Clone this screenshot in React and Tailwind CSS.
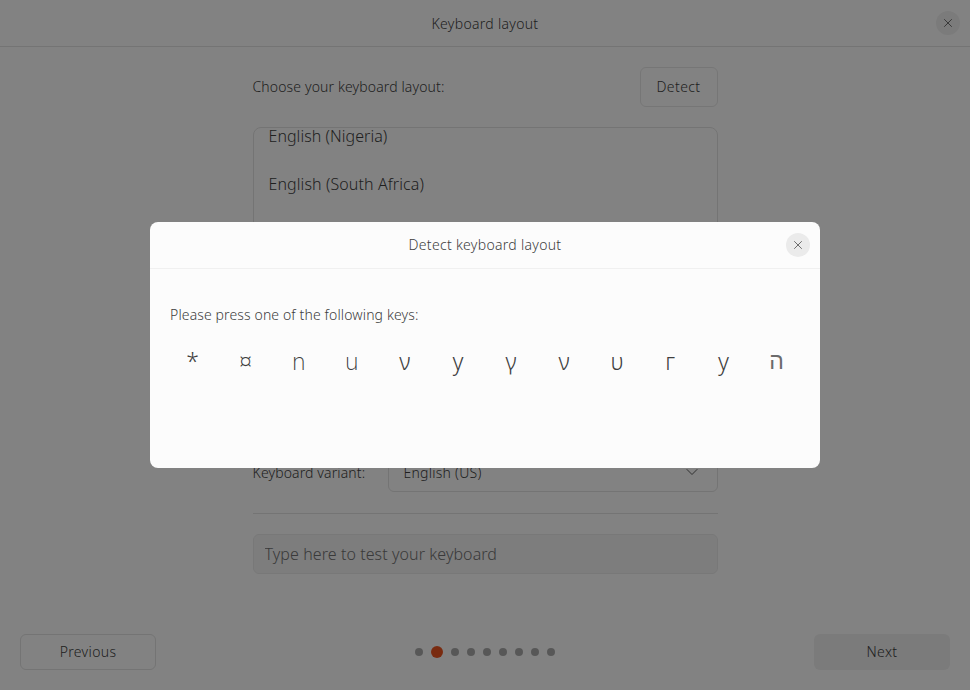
import React from 'react';
import { X, ChevronDown } from 'lucide-react';

const font = 'font-["Noto_Sans","DejaVu_Sans",sans-serif]';
const keys = ['*', '¤', 'ո', 'ս', 'ν', 'у', 'γ', 'ν', 'υ', 'г', 'у', 'ה'];
const dots = [0, 1, 2, 3, 4, 5, 6, 7, 8];

function CloseButton({ className }) {
  return (
    <button className={`flex h-6 w-6 items-center justify-center rounded-full ${className}`}>
      <X size={14} strokeWidth={1.25} />
    </button>
  );
}

export default function App() {
  return (
    <div className={`relative flex h-screen flex-col overflow-hidden bg-[#fafafa] text-[#3d3d3d] ${font}`}>
      {/* Window title */}
      <div className="flex h-[47px] shrink-0 items-center border-b border-[#dedede] pl-[34px] pr-[10px]">
        <div className="flex-1 text-center text-[14px] font-light tracking-[0.3px]">Keyboard layout</div>
        <CloseButton className="bg-[#ebebeb]" />
      </div>

      {/* Page body */}
      <div className="mx-auto flex w-[465px] flex-1 flex-col pt-5">
        <div className="flex items-center justify-between">
          <span className="pb-[2px] text-[14px] font-light tracking-[0.13px]">Choose your keyboard layout:</span>
          <button className="h-10 w-[78px] rounded-[6px] border border-[#e2e2e2] pb-[2px] text-[14px] font-light tracking-[0.4px]">Detect</button>
        </div>

        <div className="mt-5 h-[309px] overflow-hidden rounded-[8px] border border-[#dedede] pl-[15px]">
          <div className="-mt-[16px]">
            <div className="flex h-12 items-center text-[16px] font-light tracking-[0.05px]">English (Nigeria)</div>
            <div className="flex h-12 items-center text-[16px] font-light tracking-[0.1px]">English (South Africa)</div>
          </div>
        </div>

        <div className="mt-4 flex items-center justify-between">
          <span className="text-[14px] font-light tracking-[0.13px]">Keyboard variant:</span>
          <div className="flex h-10 w-[330px] items-center justify-between rounded-[6px] border border-[#dedede] pl-[15px] pr-[15px] text-[14px] font-light tracking-[0.25px]">
            <span>English (US)</span>
            <ChevronDown size={20} strokeWidth={1} />
          </div>
        </div>

        <div className="mt-[21px] border-t border-[#dedede]" />

        <input
          placeholder="Type here to test your keyboard"
          className="mt-5 h-10 rounded-[6px] border border-[#e6e6e6] bg-[#f0f0f0] px-[11px] text-[16px] font-light tracking-[0.08px] outline-none placeholder:text-[#6f6f6f]"
        />
      </div>

      {/* Footer navigation */}
      <div className="flex items-center justify-between px-5 pb-5">
        <button className="h-9 w-[136px] rounded-[6px] border border-[#dedede] pb-[2px] text-[14px] font-light tracking-[0.35px]">Previous</button>
        <div className="flex items-center gap-[8px]">
          {dots.map((d) =>
            d === 1 ? (
              <span key={d} className="h-3 w-3 rounded-full bg-[#e95420]" />
            ) : (
              <span key={d} className="h-2 w-2 rounded-full bg-[#a8a8a8]" />
            )
          )}
        </div>
        <button className="h-9 w-[136px] rounded-[6px] bg-[#ebebeb] pb-[2px] text-[14px] font-light tracking-[0.35px]">Next</button>
      </div>

      {/* Modal */}
      <div className="absolute inset-0 flex items-center justify-center bg-black/[0.48]">
        <div className="h-[246px] w-[670px] overflow-hidden rounded-[8px] bg-[#fcfcfc]">
          <div className="flex h-[47px] items-center border-b border-[#f0f0f0] pl-[34px] pr-[10px]">
            <div className="flex-1 pb-[2px] text-center text-[14px] font-light tracking-[0.3px]">Detect keyboard layout</div>
            <CloseButton className="bg-[#ebebeb]" />
          </div>
          <div className="px-5 pt-[35px] text-[14px] font-light tracking-[0.13px]">Please press one of the following keys:</div>
          <div className="mt-[19px] grid grid-cols-12 pl-4 pr-[17px] text-[23px] font-light opacity-[0.99]">
            {keys.map((k, i) => (
              <span key={i} className={k === 'ה' ? 'text-center font-["Liberation_Sans",sans-serif] text-[#6a6a6a]' : 'text-center'}>{k}</span>
            ))}
          </div>
        </div>
      </div>
    </div>
  );
}
